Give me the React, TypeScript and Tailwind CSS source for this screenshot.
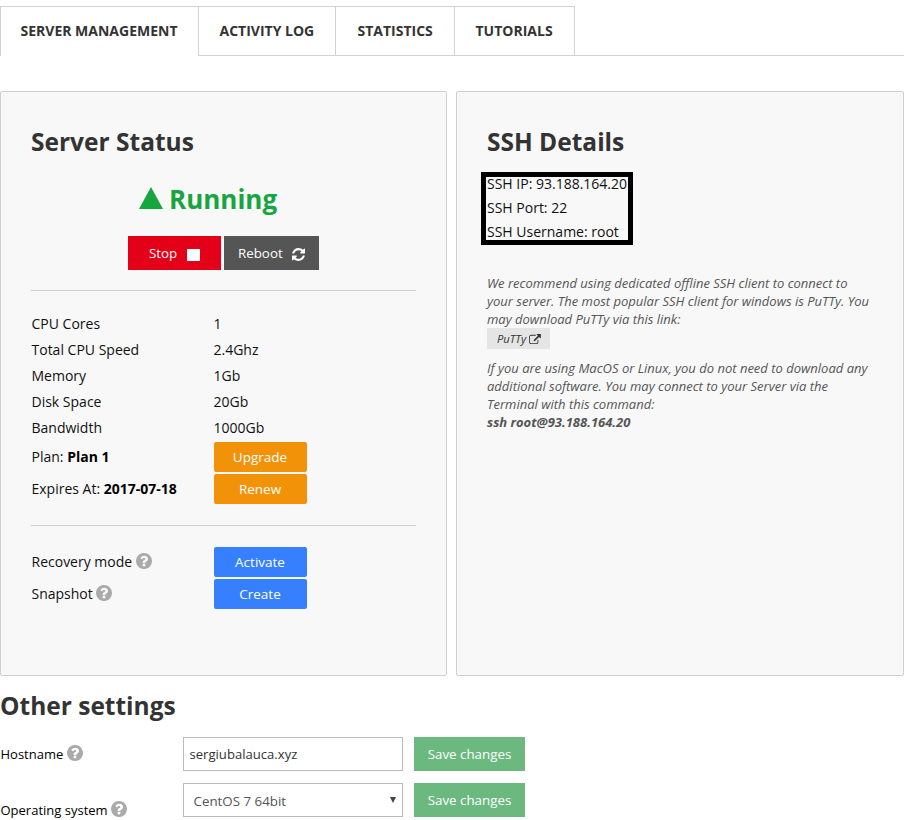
import type { ReactNode } from "react";

function QuestionIcon() {
  return (
    <svg viewBox="128 128 1536 1536" className="-mt-[3px] -ml-[0.5px] h-4 w-4 shrink-0 fill-[#aaaaaa]">
      <path d="M1024 1376v-192q0-14-9-23t-23-9h-192q-14 0-23 9t-9 23v192q0 14 9 23t23 9h192q14 0 23-9t9-23zm256-672q0-88-55.5-163t-138.5-116-170-41q-243 0-371 213-15 24 8 42l132 100q7 6 19 6 16 0 25-12 53-68 86-92 34-24 86-24 48 0 85.5 26t37.5 59q0 38-20 61t-68 45q-63 28-115.5 86.5t-52.5 125.5v36q0 14 9 23t23 9h192q14 0 23-9t9-23q0-19 21.5-49.5t54.5-49.5q32-18 49-28.5t46-35 44.5-48 28-60.5 12.5-81zm384 192q0 209-103 385.5t-279.5 279.5-385.5 103-385.5-103-279.5-279.5-103-385.5 103-385.5 279.5-279.5 385.5-103 385.5 103 279.5 279.5 103 385.5z" />
    </svg>
  );
}

function RefreshIcon() {
  return (
    <svg viewBox="0 128 1536 1536" className="mt-[3px] h-[13px] w-[13px] fill-white">
      <path d="M1511 1056q0 5-1 7-64 268-268 434.5t-478 166.5q-146 0-282.5-55t-243.5-157l-129 129q-19 19-45 19t-45-19-19-45v-448q0-26 19-45t45-19h448q26 0 45 19t19 45-19 45l-137 137q71 66 161 102t187 36q134 0 250-65t186-179q11-17 53-117 8-23 30-23h192q13 0 22.5 9.5t9.5 22.5zm25-800v448q0 26-19 45t-45 19h-448q-26 0-45-19t-19-45 19-45l138-138q-148-137-349-137-134 0-250 65t-186 179q-11 17-53 117-8 23-30 23h-199q-13 0-22.5-9.5t-9.5-22.5v-7q65-268 270-434.5t480-166.5q146 0 284 55.5t245 156.5l130-129q19-19 45-19t45 19 19 45z" />
    </svg>
  );
}

function ExternalIcon() {
  return (
    <svg viewBox="0 0 1792 1536" className="h-[10px] w-[12px] fill-[#333333]">
      <path d="M1408 928v320q0 119-84.5 203.5t-203.5 84.5h-832q-119 0-203.5-84.5t-84.5-203.5v-832q0-119 84.5-203.5t203.5-84.5h704q14 0 23 9t9 23v64q0 14-9 23t-23 9h-704q-66 0-113 47t-47 113v832q0 66 47 113t113 47h832q66 0 113-47t47-113v-320q0-14 9-23t23-9h64q14 0 23 9t9 23zm384-864v512q0 26-19 45t-45 19-45-19l-176-176-652 652q-10 10-23 10t-23-10l-114-114q-10-10-10-23t10-23l652-652-176-176q-19-19-19-45t19-45 45-19h512q26 0 45 19t19 45z" />
    </svg>
  );
}

const specs = [
  ["CPU Cores", "1"],
  ["Total CPU Speed", "2.4Ghz"],
  ["Memory", "1Gb"],
  ["Disk Space", "20Gb"],
  ["Bandwidth", "1000Gb"],
];

function ActionRow({ label, action, color }: { label: ReactNode; action: string; color: string }) {
  return (
    <div className="flex h-8 items-center">
      <div className="flex w-[183px] items-center gap-1 pl-[0.5px]">{label}</div>
      <button className={`h-[30px] w-[93px] rounded-[2px] pr-px text-[13.5px] text-white ${color}`}>{action}</button>
    </div>
  );
}

function SaveButton() {
  return <button className="ml-[11px] h-[34px] w-[111px] bg-[#6cb980] text-[13.333px] text-white">Save changes</button>;
}

export default function App() {
  return (
    <div className="h-[820px] w-[904px] overflow-hidden bg-white pt-[6px] font-['Open_Sans',sans-serif] text-[14px] leading-5 text-[#111111]">
      <nav className="flex h-[50px] text-[14px] font-bold text-[#333333]">
        <div className="flex w-[198px] items-center border-t border-l border-[#d2d2d2] pb-px pl-[19.5px]">SERVER MANAGEMENT</div>
        <div className="flex w-[137px] items-center border border-r-0 border-[#d2d2d2] pl-[20.5px]">ACTIVITY LOG</div>
        <div className="flex w-[119px] items-center border border-r-0 border-[#d2d2d2] pl-[21.5px]">STATISTICS</div>
        <div className="flex w-[121px] items-center border border-[#d2d2d2] pl-[20.5px]">TUTORIALS</div>
        <div className="flex-1 border-b border-[#d2d2d2]" />
      </nav>

      <main className="mt-[35px] flex h-[585px] gap-[9px]">
        <section className="w-[447px] rounded-[2px] border border-[#cfcfcf] bg-[#f8f8f8] px-[30px] pt-[32px]">
          <h2 className="text-[24.5px] leading-[36px] font-bold text-[#333333]">Server Status</h2>
          <div className="mt-[21px] flex h-[36px] items-center pl-[108px] text-[26px] font-bold text-[#16a53f]">
            <svg viewBox="0 0 24 22" className="mr-[6px] h-[22px] w-[24px] -translate-y-px fill-current">
              <path d="M12 0 24 22H0Z" />
            </svg>
            Running
          </div>
          <div className="mt-[19px] flex gap-[3px] pl-[97px] text-[13.333px] text-white">
            <button className="flex h-[34px] w-[93px] items-center gap-[10px] bg-[#e50019] pl-[21px]">
              Stop
              <span className="mt-[3px] h-[12px] w-[13px] bg-white" />
            </button>
            <button className="flex h-[34px] w-[95px] items-center gap-[9px] bg-[#555555] pl-[14px]">
              Reboot
              <RefreshIcon />
            </button>
          </div>
          <div className="mt-[20px] w-[385px] border-t border-[#cfcfcf]" />
          <div className="mt-[20px]">
            {specs.map(([name, value]) => (
              <div key={name} className="flex h-[26px] items-center">
                <span className="w-[182.5px] pl-[0.5px]">{name}</span>
                <span>{value}</span>
              </div>
            ))}
            <ActionRow label={<span>Plan: <b className="text-black">Plan 1</b></span>} action="Upgrade" color="bg-[#f29209]" />
            <ActionRow label={<span>Expires At: <b className="text-black">2017-07-18</b></span>} action="Renew" color="bg-[#f29209]" />
          </div>
          <div className="mt-[20px] w-[385px] border-t border-[#cfcfcf]" />
          <div className="mt-[20px]">
            <ActionRow label={<>Recovery mode <QuestionIcon /></>} action="Activate" color="bg-[#3680ff]" />
            <ActionRow label={<>Snapshot <QuestionIcon /></>} action="Create" color="bg-[#3680ff]" />
          </div>
        </section>

        <section className="w-[448px] rounded-[2px] border border-[#cfcfcf] bg-[#f8f8f8] px-[30px] pt-[32px]">
          <h2 className="text-[24.5px] leading-[36px] font-bold text-[#333333]">SSH Details</h2>
          <div className="-ml-[6px] mt-[12px] h-[73px] w-[152px] border-[5px] border-black pl-px leading-[24px] whitespace-nowrap">
            <div className="-mt-[5px]">SSH IP: 93.188.164.20</div>
            <div>SSH Port: 22</div>
            <div>SSH Username: root</div>
          </div>
          <div className="mt-[29px] text-[13px] leading-[18px] whitespace-nowrap text-[#555555] italic">
            <p>
              We recommend using dedicated offline SSH client to connect to
              <br />
              your server. The most popular SSH client for windows is PuTTy. You
              <br />
              may download PuTTy via this link:
            </p>
            <a className="flex h-[21px] w-[63px] items-center gap-[3px] bg-[#e5e5e5] pl-[10px] text-[11.2px] text-[#333333]">
              PuTTy <ExternalIcon />
            </a>
            <p className="mt-[10px]">
              If you are using MacOS or Linux, you do not need to download any
              <br />
              additional software. You may connect to your Server via the
              <br />
              Terminal with this command:
              <br />
              <b>ssh root@93.188.164.20</b>
            </p>
          </div>
        </section>
      </main>

      <h2 className="mt-[12px] text-[24.5px] leading-[36px] font-bold text-[#333333]">Other settings</h2>
      <div className="mt-[13px] flex h-[34px] items-center text-[13px]">
        <div className="flex w-[183px] items-center gap-1 pl-[0.5px] text-black">Hostname <QuestionIcon /></div>
        <div className="flex h-[34px] w-[220px] items-center border border-[#bbbbbb] pl-[5.5px] text-[13.1px] text-[#333333]">sergiubalauca.xyz</div>
        <SaveButton />
      </div>
      <div className="mt-[12px] flex h-[34px] text-[13px]">
        <div className="flex w-[183px] items-center gap-1 pt-[20px] pl-[0.5px] text-black">Operating system <QuestionIcon /></div>
        <div className="flex h-[34px] w-[220px] items-center justify-between border border-[#bbbbbb] pt-px pr-[6px] pl-[9.5px] text-[13.333px] text-[#555555]">
          CentOS 7 64bit
          <svg viewBox="0 0 6 6" className="h-[6px] w-[6px] -translate-y-px fill-[#444444]">
            <path d="M0 0H6L3 6Z" />
          </svg>
        </div>
        <SaveButton />
      </div>
    </div>
  );
}
